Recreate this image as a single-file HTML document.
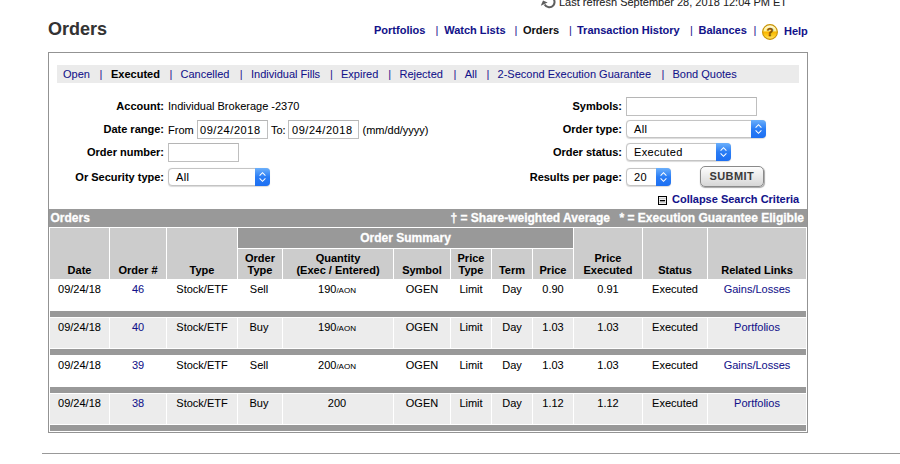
<!DOCTYPE html><html><head><meta charset="utf-8"><style>
html,body{margin:0;padding:0;background:#fff;}
body{width:900px;height:464px;overflow:hidden;position:relative;font-family:"Liberation Sans",sans-serif;}
.t{position:absolute;white-space:nowrap;font-size:11px;line-height:0;color:#000;-webkit-text-stroke:0.06px currentColor;}
.b{font-weight:bold;}
.lk{color:#12128a;}
.blk{font-weight:bold;color:#12128a;}
.inp{position:absolute;box-sizing:border-box;border:1px solid #bfbfbf;border-top-color:#b5b5b5;background:#fff;}
.sel{position:absolute;box-sizing:border-box;border:1px solid #c4c4c4;border-radius:4px;background:#fff;box-shadow:0 0.5px 1px rgba(0,0,0,0.15);}
.arr{position:absolute;top:-1px;right:-1px;bottom:-1px;width:15px;border-radius:0 4px 4px 0;background:linear-gradient(#6cb0fb,#2a7df5 50%,#1d6ff2);}
</style></head><body>
<svg style="position:absolute;left:540px;top:-5px" width="16" height="14" viewBox="0 0 16 14"><path d="M4.6 9.6 A5.3 5.3 0 1 0 10.65 1.9" fill="none" stroke="#5e5e5e" stroke-width="2"/><path d="M0.8 10.8 L3 5.6 L7.6 7.4 Z" fill="#5e5e5e"/></svg>
<div class="t r" style="left:559px;top:2px;color:#222;">Last refresh September 28, 2018 12:04 PM ET</div>
<div class="t b" style="left:48px;top:29px;font-size:18px;color:#333;">Orders</div>
<div class="t blk" style="left:374px;top:30px;">Portfolios</div>
<div class="t r" style="left:435.5px;top:30px;color:#2b2393;">|</div>
<div class="t blk" style="left:444.2px;top:30px;">Watch Lists</div>
<div class="t r" style="left:514.5px;top:30px;color:#2b2393;">|</div>
<div class="t bk" style="left:523px;top:30px;font-weight:bold;color:#111;">Orders</div>
<div class="t r" style="left:569px;top:30px;color:#2b2393;">|</div>
<div class="t blk" style="left:577px;top:30px;">Transaction History</div>
<div class="t r" style="left:690px;top:30px;color:#2b2393;">|</div>
<div class="t blk" style="left:698.5px;top:30px;">Balances</div>
<div class="t r" style="left:753.5px;top:30px;color:#2b2393;">|</div>
<div class="t blk" style="left:784px;top:31px;">Help</div>
<svg style="position:absolute;left:762px;top:24px" width="16" height="16" viewBox="0 0 16 16">
<defs><linearGradient id="hg" x1="0" y1="0" x2="0" y2="1"><stop offset="0" stop-color="#fffce8"/><stop offset="0.42" stop-color="#fff090"/><stop offset="0.5" stop-color="#f8b400"/><stop offset="0.75" stop-color="#ffcc20"/><stop offset="1" stop-color="#ffe680"/></linearGradient></defs>
<circle cx="8" cy="8" r="7.4" fill="url(#hg)" stroke="#c99200" stroke-width="1.1"/>
<text x="8.1" y="12.2" text-anchor="middle" font-family="Liberation Sans" font-weight="bold" font-size="11.5" fill="#8a5200" stroke="#8a5200" stroke-width="0.4">?</text></svg>
<div style="position:absolute;left:48px;top:52px;width:760px;height:381px;box-sizing:border-box;border:1px solid #939393;"></div>
<div style="position:absolute;left:57px;top:65px;width:742px;height:18px;background:#ebebeb;"></div>
<div class="t lk" style="left:63px;top:74px;">Open</div>
<div class="t r" style="left:99.5px;top:74px;color:#2b2393;">|</div>
<div class="t b" style="left:111px;top:74px;">Executed</div>
<div class="t r" style="left:169.5px;top:74px;color:#2b2393;">|</div>
<div class="t lk" style="left:180.5px;top:74px;">Cancelled</div>
<div class="t r" style="left:239.8px;top:74px;color:#2b2393;">|</div>
<div class="t lk" style="left:251px;top:74px;">Individual Fills</div>
<div class="t r" style="left:330px;top:74px;color:#2b2393;">|</div>
<div class="t lk" style="left:341px;top:74px;">Expired</div>
<div class="t r" style="left:388.2px;top:74px;color:#2b2393;">|</div>
<div class="t lk" style="left:399.5px;top:74px;">Rejected</div>
<div class="t r" style="left:453.5px;top:74px;color:#2b2393;">|</div>
<div class="t lk" style="left:464.7px;top:74px;">All</div>
<div class="t r" style="left:486.5px;top:74px;color:#2b2393;">|</div>
<div class="t lk" style="left:497.6px;top:74px;">2-Second Execution Guarantee</div>
<div class="t r" style="left:661.4px;top:74px;color:#2b2393;">|</div>
<div class="t lk" style="left:672.5px;top:74px;">Bond Quotes</div>
<div class="t b" style="right:736px;top:106px;">Account:</div>
<div class="t r" style="left:168px;top:106px;">Individual Brokerage -2370</div>
<div class="t b" style="right:736px;top:129px;">Date range:</div>
<div class="t r" style="left:168px;top:130px;">From</div>
<div class="inp" style="left:197px;top:120px;width:71px;height:19px;"></div>
<div class="t r" style="left:200px;top:130px;letter-spacing:0.55px;">09/24/2018</div>
<div class="t r" style="left:271px;top:130px;">To:</div>
<div class="inp" style="left:288px;top:120px;width:71px;height:19px;"></div>
<div class="t r" style="left:292px;top:130px;letter-spacing:0.55px;">09/24/2018</div>
<div class="t r" style="left:362.5px;top:130px;">(mm/dd/yyyy)</div>
<div class="t b" style="right:736px;top:152px;">Order number:</div>
<div class="inp" style="left:168px;top:143px;width:71px;height:19px;"></div>
<div class="t b" style="right:736px;top:177px;">Or Security type:</div>
<div class="sel" style="left:168px;top:168px;width:102px;height:18px;"><div class="arr"><svg style="position:absolute;left:3px;top:3px" width="9" height="12" viewBox="0 0 9 12"><path d="M1.6 4.6 L4.5 1.7 L7.4 4.6 M1.6 7.4 L4.5 10.3 L7.4 7.4" fill="none" stroke="#fff" stroke-width="1.05"/></svg></div></div>
<div class="t r" style="left:176px;top:177px;letter-spacing:0.35px;">All</div>
<div class="t b" style="right:278px;top:106px;">Symbols:</div>
<div class="inp" style="left:626px;top:97px;width:131px;height:19px;"></div>
<div class="t b" style="right:278px;top:129px;">Order type:</div>
<div class="sel" style="left:626px;top:120px;width:140px;height:18px;"><div class="arr"><svg style="position:absolute;left:3px;top:3px" width="9" height="12" viewBox="0 0 9 12"><path d="M1.6 4.6 L4.5 1.7 L7.4 4.6 M1.6 7.4 L4.5 10.3 L7.4 7.4" fill="none" stroke="#fff" stroke-width="1.05"/></svg></div></div>
<div class="t r" style="left:634px;top:129px;letter-spacing:0.35px;">All</div>
<div class="t b" style="right:278px;top:152px;">Order status:</div>
<div class="sel" style="left:626px;top:143px;width:105px;height:18px;"><div class="arr"><svg style="position:absolute;left:3px;top:3px" width="9" height="12" viewBox="0 0 9 12"><path d="M1.6 4.6 L4.5 1.7 L7.4 4.6 M1.6 7.4 L4.5 10.3 L7.4 7.4" fill="none" stroke="#fff" stroke-width="1.05"/></svg></div></div>
<div class="t r" style="left:634px;top:152px;letter-spacing:0.35px;">Executed</div>
<div class="t b" style="right:278px;top:177px;">Results per page:</div>
<div class="sel" style="left:626px;top:168px;width:45px;height:18px;"><div class="arr"><svg style="position:absolute;left:3px;top:3px" width="9" height="12" viewBox="0 0 9 12"><path d="M1.6 4.6 L4.5 1.7 L7.4 4.6 M1.6 7.4 L4.5 10.3 L7.4 7.4" fill="none" stroke="#fff" stroke-width="1.05"/></svg></div></div>
<div class="t r" style="left:634px;top:177px;letter-spacing:0.35px;">20</div>
<div style="position:absolute;left:700px;top:166px;width:64px;height:21px;box-sizing:border-box;border:1px solid #8a8a8a;border-radius:5px;background:linear-gradient(#fdfdfd,#e6e6e6 60%,#d6d6d6);box-shadow:0.5px 1px 1px rgba(0,0,0,0.35);"></div>
<div class="t b" style="left:709.5px;top:176px;color:#3a3a3a;letter-spacing:0.4px;-webkit-text-stroke:0;">SUBMIT</div>
<div style="position:absolute;left:658px;top:196px;width:9px;height:9px;box-sizing:border-box;border:1px solid #000;background:repeating-linear-gradient(#f0f0f0 0 1px,#cfcfcf 1px 2px);"></div>
<div style="position:absolute;left:660px;top:200px;width:5px;height:1px;background:#000;box-shadow:0 0.5px 0 #555;"></div>
<div class="t blk" style="left:672px;top:199px;">Collapse Search Criteria</div>
<div style="position:absolute;left:49px;top:209px;width:758px;height:18px;background:#999;"></div>
<div class="t b" style="left:50.5px;top:218px;font-size:12px;color:#fff;-webkit-text-stroke:0.3px #fff;">Orders</div>
<div class="t b" style="left:450.5px;top:218px;font-size:12px;color:#fff;-webkit-text-stroke:0.3px #fff;">† = Share-weighted Average</div>
<div class="t b" style="left:619.5px;top:218px;font-size:12px;color:#fff;-webkit-text-stroke:0.3px #fff;">* = Execution Guarantee Eligible</div>
<div style="position:absolute;left:50px;top:228px;width:59px;height:51px;background:#ccc;"></div>
<div style="position:absolute;left:110px;top:228px;width:56px;height:51px;background:#ccc;"></div>
<div style="position:absolute;left:167px;top:228px;width:70px;height:51px;background:#ccc;"></div>
<div style="position:absolute;left:238px;top:249px;width:44px;height:30px;background:#ccc;"></div>
<div style="position:absolute;left:283px;top:249px;width:110px;height:30px;background:#ccc;"></div>
<div style="position:absolute;left:394px;top:249px;width:56px;height:30px;background:#ccc;"></div>
<div style="position:absolute;left:451px;top:249px;width:40px;height:30px;background:#ccc;"></div>
<div style="position:absolute;left:492px;top:249px;width:40px;height:30px;background:#ccc;"></div>
<div style="position:absolute;left:533px;top:249px;width:40px;height:30px;background:#ccc;"></div>
<div style="position:absolute;left:574px;top:228px;width:68px;height:51px;background:#ccc;"></div>
<div style="position:absolute;left:643px;top:228px;width:64px;height:51px;background:#ccc;"></div>
<div style="position:absolute;left:708px;top:228px;width:98px;height:51px;background:#ccc;"></div>
<div style="position:absolute;left:238px;top:228px;width:335px;height:20px;background:#999;"></div>
<div class="t b" style="left:238px;width:335px;text-align:center;top:238px;font-size:12px;color:#fff;-webkit-text-stroke:0.3px #fff;">Order Summary</div>
<div class="t b" style="left:50px;width:59px;text-align:center;top:270px;">Date</div>
<div class="t b" style="left:110px;width:56px;text-align:center;top:270px;">Order #</div>
<div class="t b" style="left:167px;width:70px;text-align:center;top:270px;">Type</div>
<div class="t b" style="left:238px;width:44px;text-align:center;top:258px;">Order</div>
<div class="t b" style="left:238px;width:44px;text-align:center;top:270px;">Type</div>
<div class="t b" style="left:283px;width:110px;text-align:center;top:258px;">Quantity</div>
<div class="t b" style="left:283px;width:110px;text-align:center;top:270px;">(Exec / Entered)</div>
<div class="t b" style="left:394px;width:56px;text-align:center;top:270px;">Symbol</div>
<div class="t b" style="left:451px;width:40px;text-align:center;top:258px;">Price</div>
<div class="t b" style="left:451px;width:40px;text-align:center;top:270px;">Type</div>
<div class="t b" style="left:492px;width:40px;text-align:center;top:270px;">Term</div>
<div class="t b" style="left:533px;width:40px;text-align:center;top:270px;">Price</div>
<div class="t b" style="left:574px;width:68px;text-align:center;top:258px;">Price</div>
<div class="t b" style="left:574px;width:68px;text-align:center;top:270px;">Executed</div>
<div class="t b" style="left:643px;width:64px;text-align:center;top:270px;">Status</div>
<div class="t b" style="left:708px;width:98px;text-align:center;top:270px;">Related Links</div>
<div style="position:absolute;left:50px;top:311px;width:756px;height:6px;background:#999;"></div>
<div class="t r" style="left:50px;width:59px;text-align:center;top:289px;">09/24/18</div>
<div class="t lk" style="left:110px;width:56px;text-align:center;top:289px;">46</div>
<div class="t r" style="left:167px;width:70px;text-align:center;top:289px;">Stock/ETF</div>
<div class="t r" style="left:237px;width:44px;text-align:center;top:289px;">Sell</div>
<div class="t r" style="left:282px;width:110px;text-align:center;top:289px;">190<span style="font-size:8px">/AON</span></div>
<div class="t r" style="left:394px;width:56px;text-align:center;top:289px;">OGEN</div>
<div class="t r" style="left:451px;width:40px;text-align:center;top:289px;">Limit</div>
<div class="t r" style="left:492px;width:40px;text-align:center;top:289px;">Day</div>
<div class="t r" style="left:533px;width:40px;text-align:center;top:289px;">0.90</div>
<div class="t r" style="left:574px;width:68px;text-align:center;top:289px;">0.91</div>
<div class="t r" style="left:643px;width:64px;text-align:center;top:289px;">Executed</div>
<div class="t lk" style="left:708px;width:98px;text-align:center;top:289px;">Gains/Losses</div>
<div style="position:absolute;left:50px;top:318px;width:59px;height:30px;background:#ececec;"></div>
<div style="position:absolute;left:110px;top:318px;width:56px;height:30px;background:#ececec;"></div>
<div style="position:absolute;left:167px;top:318px;width:70px;height:30px;background:#ececec;"></div>
<div style="position:absolute;left:238px;top:318px;width:44px;height:30px;background:#ececec;"></div>
<div style="position:absolute;left:283px;top:318px;width:110px;height:30px;background:#ececec;"></div>
<div style="position:absolute;left:394px;top:318px;width:56px;height:30px;background:#ececec;"></div>
<div style="position:absolute;left:451px;top:318px;width:40px;height:30px;background:#ececec;"></div>
<div style="position:absolute;left:492px;top:318px;width:40px;height:30px;background:#ececec;"></div>
<div style="position:absolute;left:533px;top:318px;width:40px;height:30px;background:#ececec;"></div>
<div style="position:absolute;left:574px;top:318px;width:68px;height:30px;background:#ececec;"></div>
<div style="position:absolute;left:643px;top:318px;width:64px;height:30px;background:#ececec;"></div>
<div style="position:absolute;left:708px;top:318px;width:98px;height:30px;background:#ececec;"></div>
<div style="position:absolute;left:50px;top:349px;width:756px;height:6px;background:#999;"></div>
<div class="t r" style="left:50px;width:59px;text-align:center;top:327px;">09/24/18</div>
<div class="t lk" style="left:110px;width:56px;text-align:center;top:327px;">40</div>
<div class="t r" style="left:167px;width:70px;text-align:center;top:327px;">Stock/ETF</div>
<div class="t r" style="left:237px;width:44px;text-align:center;top:327px;">Buy</div>
<div class="t r" style="left:282px;width:110px;text-align:center;top:327px;">190<span style="font-size:8px">/AON</span></div>
<div class="t r" style="left:394px;width:56px;text-align:center;top:327px;">OGEN</div>
<div class="t r" style="left:451px;width:40px;text-align:center;top:327px;">Limit</div>
<div class="t r" style="left:492px;width:40px;text-align:center;top:327px;">Day</div>
<div class="t r" style="left:533px;width:40px;text-align:center;top:327px;">1.03</div>
<div class="t r" style="left:574px;width:68px;text-align:center;top:327px;">1.03</div>
<div class="t r" style="left:643px;width:64px;text-align:center;top:327px;">Executed</div>
<div class="t lk" style="left:708px;width:98px;text-align:center;top:327px;">Portfolios</div>
<div style="position:absolute;left:50px;top:387px;width:756px;height:6px;background:#999;"></div>
<div class="t r" style="left:50px;width:59px;text-align:center;top:365px;">09/24/18</div>
<div class="t lk" style="left:110px;width:56px;text-align:center;top:365px;">39</div>
<div class="t r" style="left:167px;width:70px;text-align:center;top:365px;">Stock/ETF</div>
<div class="t r" style="left:237px;width:44px;text-align:center;top:365px;">Sell</div>
<div class="t r" style="left:282px;width:110px;text-align:center;top:365px;">200<span style="font-size:8px">/AON</span></div>
<div class="t r" style="left:394px;width:56px;text-align:center;top:365px;">OGEN</div>
<div class="t r" style="left:451px;width:40px;text-align:center;top:365px;">Limit</div>
<div class="t r" style="left:492px;width:40px;text-align:center;top:365px;">Day</div>
<div class="t r" style="left:533px;width:40px;text-align:center;top:365px;">1.03</div>
<div class="t r" style="left:574px;width:68px;text-align:center;top:365px;">1.03</div>
<div class="t r" style="left:643px;width:64px;text-align:center;top:365px;">Executed</div>
<div class="t lk" style="left:708px;width:98px;text-align:center;top:365px;">Gains/Losses</div>
<div style="position:absolute;left:50px;top:394px;width:59px;height:30px;background:#ececec;"></div>
<div style="position:absolute;left:110px;top:394px;width:56px;height:30px;background:#ececec;"></div>
<div style="position:absolute;left:167px;top:394px;width:70px;height:30px;background:#ececec;"></div>
<div style="position:absolute;left:238px;top:394px;width:44px;height:30px;background:#ececec;"></div>
<div style="position:absolute;left:283px;top:394px;width:110px;height:30px;background:#ececec;"></div>
<div style="position:absolute;left:394px;top:394px;width:56px;height:30px;background:#ececec;"></div>
<div style="position:absolute;left:451px;top:394px;width:40px;height:30px;background:#ececec;"></div>
<div style="position:absolute;left:492px;top:394px;width:40px;height:30px;background:#ececec;"></div>
<div style="position:absolute;left:533px;top:394px;width:40px;height:30px;background:#ececec;"></div>
<div style="position:absolute;left:574px;top:394px;width:68px;height:30px;background:#ececec;"></div>
<div style="position:absolute;left:643px;top:394px;width:64px;height:30px;background:#ececec;"></div>
<div style="position:absolute;left:708px;top:394px;width:98px;height:30px;background:#ececec;"></div>
<div style="position:absolute;left:50px;top:425px;width:756px;height:6px;background:#999;"></div>
<div class="t r" style="left:50px;width:59px;text-align:center;top:403px;">09/24/18</div>
<div class="t lk" style="left:110px;width:56px;text-align:center;top:403px;">38</div>
<div class="t r" style="left:167px;width:70px;text-align:center;top:403px;">Stock/ETF</div>
<div class="t r" style="left:237px;width:44px;text-align:center;top:403px;">Buy</div>
<div class="t r" style="left:282px;width:110px;text-align:center;top:403px;">200</div>
<div class="t r" style="left:394px;width:56px;text-align:center;top:403px;">OGEN</div>
<div class="t r" style="left:451px;width:40px;text-align:center;top:403px;">Limit</div>
<div class="t r" style="left:492px;width:40px;text-align:center;top:403px;">Day</div>
<div class="t r" style="left:533px;width:40px;text-align:center;top:403px;">1.12</div>
<div class="t r" style="left:574px;width:68px;text-align:center;top:403px;">1.12</div>
<div class="t r" style="left:643px;width:64px;text-align:center;top:403px;">Executed</div>
<div class="t lk" style="left:708px;width:98px;text-align:center;top:403px;">Portfolios</div>
<div style="position:absolute;left:42px;top:453px;width:858px;height:1px;background:#999;"></div>
</body></html>
